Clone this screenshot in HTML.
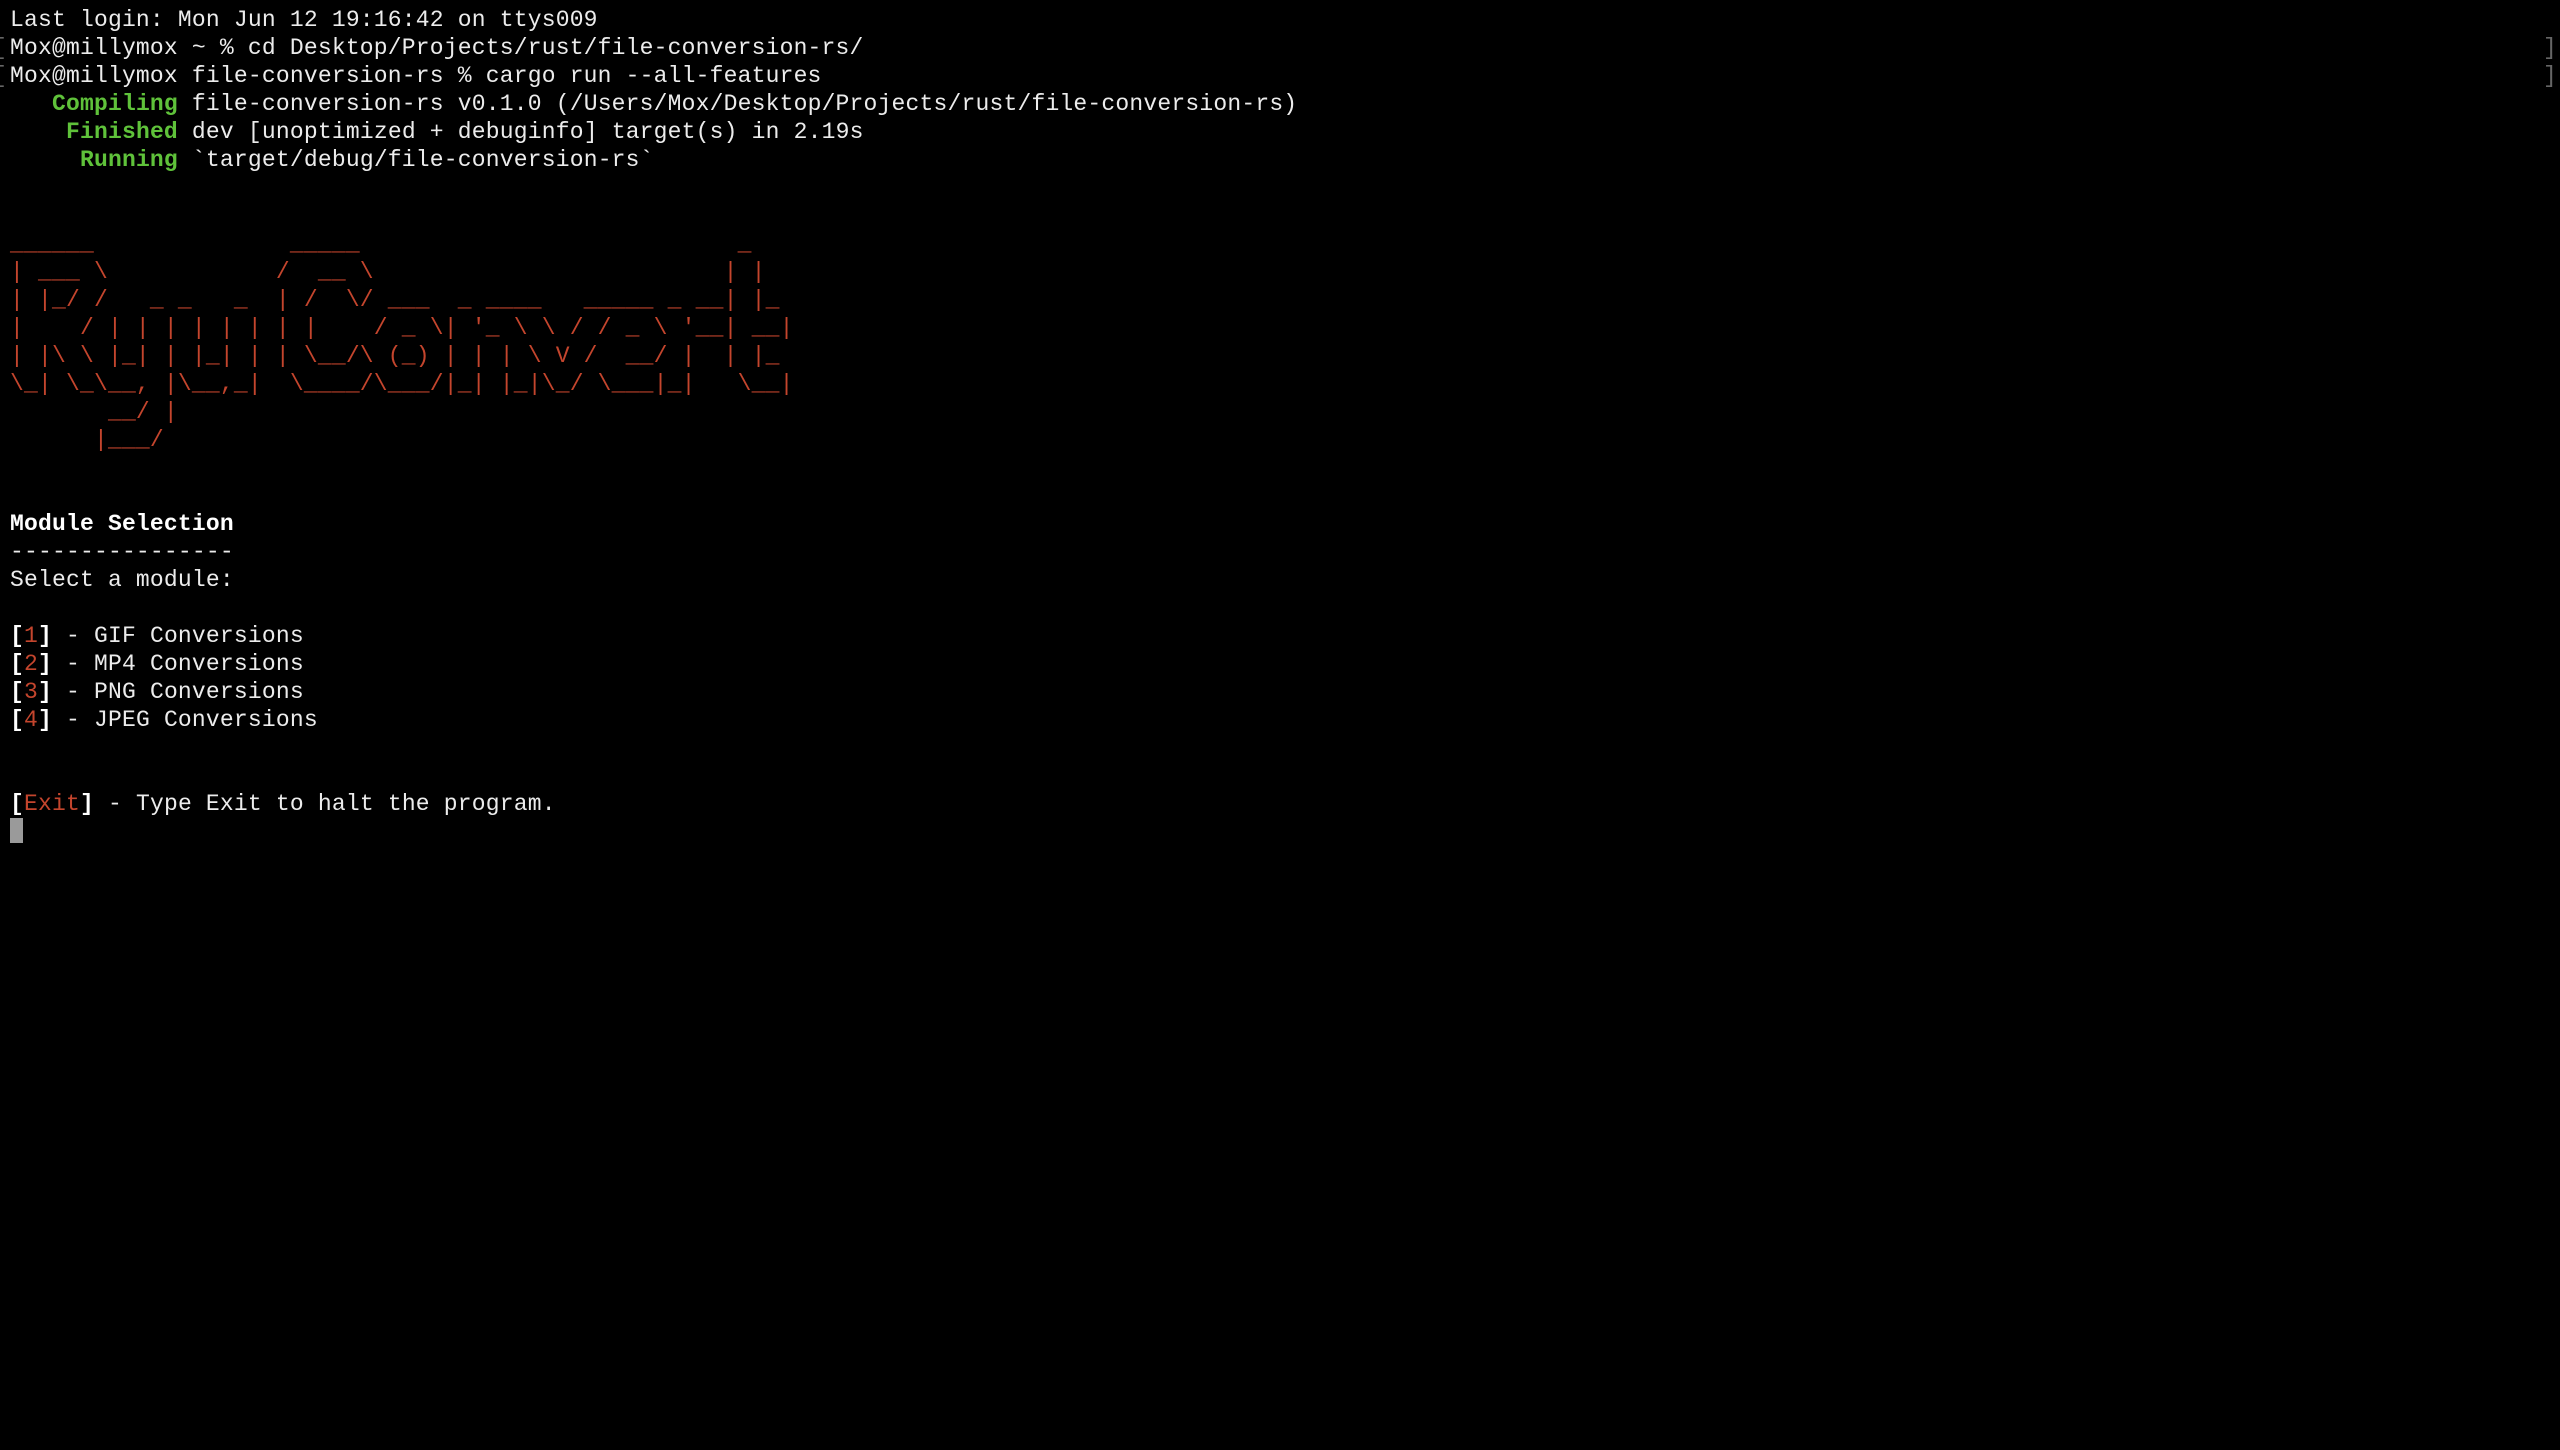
<!DOCTYPE html>
<html><head><meta charset="utf-8"><style>
html,body{margin:0;padding:0;background:#000;width:2560px;height:1450px;overflow:hidden}
#t{position:absolute;left:10px;top:6px;font-family:"Liberation Mono",monospace;font-size:23px;letter-spacing:0.19px;line-height:28px;color:#ececec;white-space:pre}
.l{height:28px}
.g{color:#5fc23a;font-weight:bold}
.r{color:#c4452d}
.b{font-weight:bold;color:#fff}
.m{position:absolute;font-family:"Liberation Mono",monospace;font-size:23px;line-height:28px;color:#666}
.cur{display:inline-block;width:13px;height:25px;background:#9a9a9a;vertical-align:-5px}
</style></head><body>
<div class="m" style="left:-7px;top:34px">[</div>
<div class="m" style="left:-7px;top:62px">[</div>
<div class="m" style="left:2543px;top:34px">]</div>
<div class="m" style="left:2543px;top:62px">]</div>
<div id="t"><div class="l">Last login: Mon Jun 12 19:16:42 on ttys009</div><div class="l">Mox@millymox ~ % cd Desktop/Projects/rust/file-conversion-rs/</div><div class="l">Mox@millymox file-conversion-rs % cargo run --all-features</div><div class="l">   <span class="g">Compiling</span> file-conversion-rs v0.1.0 (/Users/Mox/Desktop/Projects/rust/file-conversion-rs)</div><div class="l">    <span class="g">Finished</span> dev [unoptimized + debuginfo] target(s) in 2.19s</div><div class="l">     <span class="g">Running</span> `target/debug/file-conversion-rs`</div><div class="l"> </div><div class="l"> </div><div class="r"><div class="l">______              _____                           _</div><div class="l">| ___ \            /  __ \                         | |</div><div class="l">| |_/ /   _ _   _  | /  \/ ___  _ ____   _____ _ __| |_</div><div class="l">|    / | | | | | | | |    / _ \| '_ \ \ / / _ \ '__| __|</div><div class="l">| |\ \ |_| | |_| | | \__/\ (_) | | | \ V /  __/ |  | |_</div><div class="l">\_| \_\__, |\__,_|  \____/\___/|_| |_|\_/ \___|_|   \__|</div><div class="l">       __/ |</div><div class="l">      |___/</div></div><div class="l"> </div><div class="l"> </div><div class="l b">Module Selection</div><div class="l">----------------</div><div class="l">Select a module:</div><div class="l"> </div><div class="l"><span class="b">[</span><span class="r">1</span><span class="b">]</span> - GIF Conversions</div><div class="l"><span class="b">[</span><span class="r">2</span><span class="b">]</span> - MP4 Conversions</div><div class="l"><span class="b">[</span><span class="r">3</span><span class="b">]</span> - PNG Conversions</div><div class="l"><span class="b">[</span><span class="r">4</span><span class="b">]</span> - JPEG Conversions</div><div class="l"> </div><div class="l"> </div><div class="l"><span class="b">[</span><span class="r">Exit</span><span class="b">]</span> - Type Exit to halt the program.</div><div class="l"><span class="cur"></span></div></div>
</body></html>
